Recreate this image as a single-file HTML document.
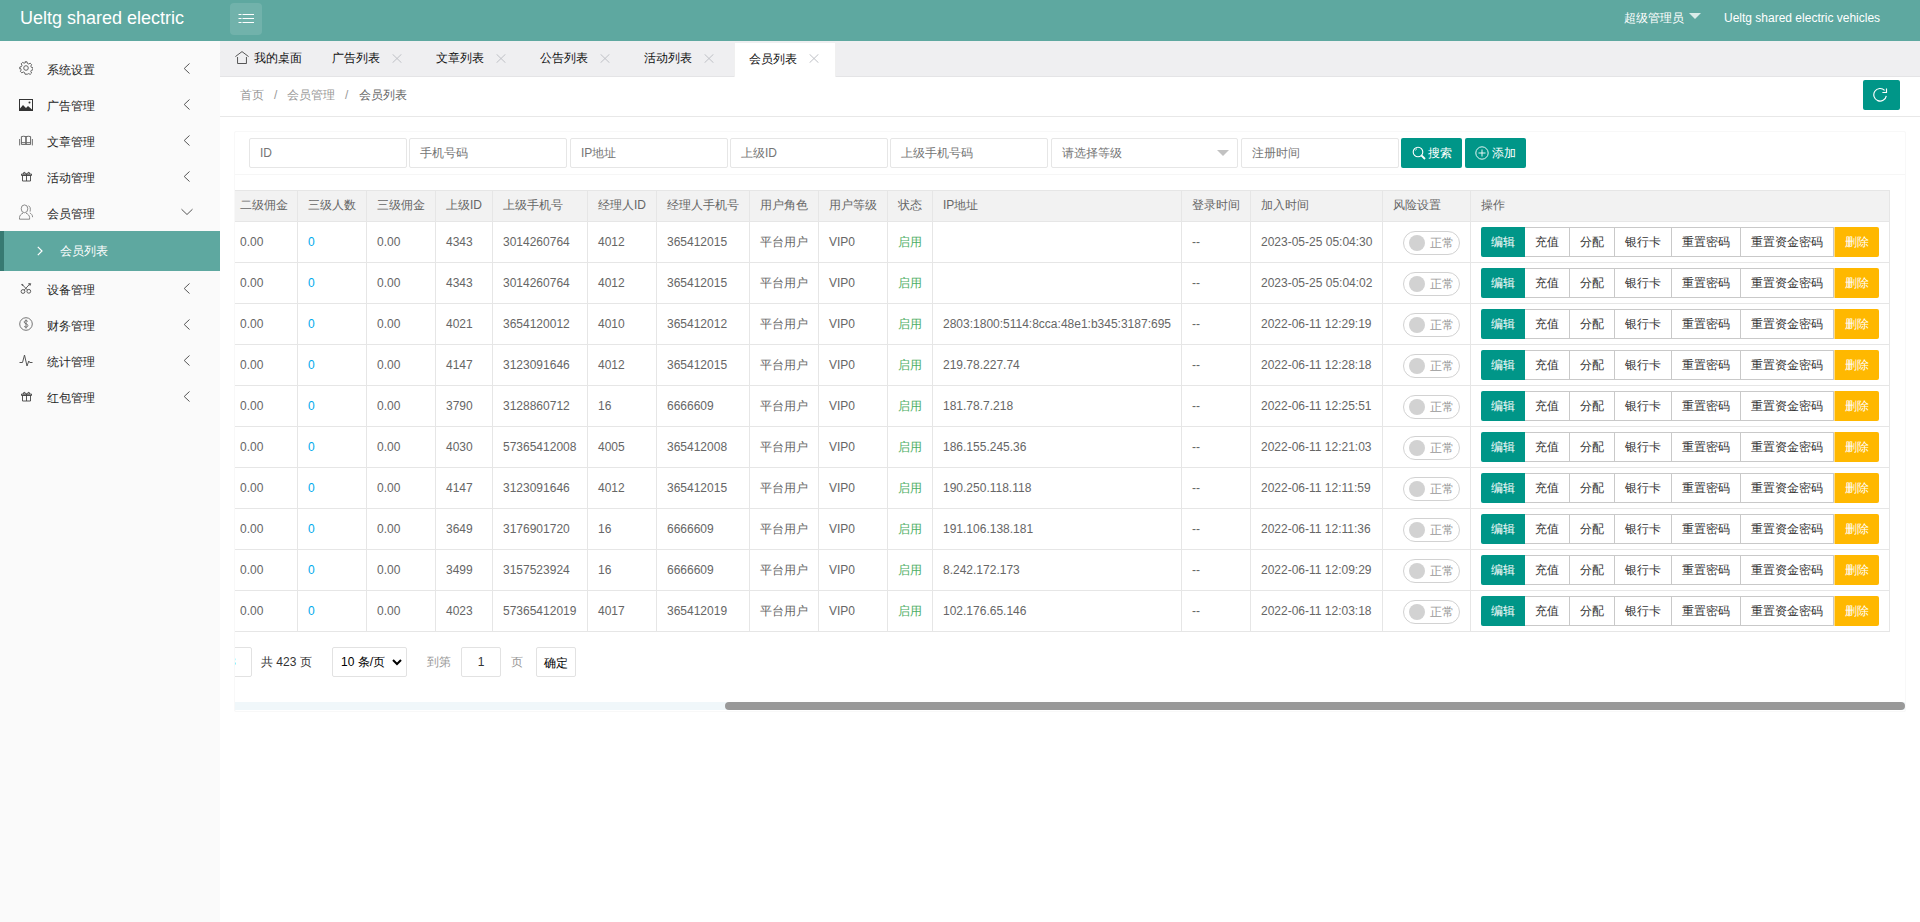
<!DOCTYPE html><html><head><meta charset="utf-8"><title>member</title><style>
*{margin:0;padding:0;box-sizing:border-box}
html,body{width:1920px;height:922px;overflow:hidden;background:#fff;font-family:"Liberation Sans",sans-serif;font-size:12px;color:#333}
.abs{position:absolute}
.header{position:absolute;left:0;top:0;width:1920px;height:41px;background:#5ea8a0}
.logo{position:absolute;left:20px;top:7px;font-size:18px;line-height:22px;color:#fff;white-space:nowrap}
.ham{position:absolute;left:230px;top:3px;width:32px;height:32px;border-radius:4px;background:rgba(255,255,255,.12)}
.hright{position:absolute;top:10px;font-size:12px;line-height:16px;color:#fff;white-space:nowrap}
.side{position:absolute;left:0;top:41px;width:220px;height:881px;background:#fafafa}
.mi{position:absolute;left:0;width:220px;height:36px}
.mi .t{position:absolute;left:47px;top:1px;line-height:36px;font-size:12px;color:#262626;white-space:nowrap}
.mi svg.ic{position:absolute;left:19px}
.mi svg.ar{position:absolute;left:183px}
.sub{position:absolute;left:0;top:190px;width:220px;height:40px;background:#5ea8a0;border-left:4px solid #377a72}
.sub .t{position:absolute;left:56px;top:0;line-height:40px;color:#fff;font-size:12px}
.tabs{position:absolute;left:220px;top:41px;width:1700px;height:36px;background:#efeff1;border-bottom:1px solid #e4e4e6}
.tab{position:absolute;top:0;height:36px;line-height:35px;font-size:12px;color:#111;white-space:nowrap}
.tab.on{background:#fff;top:2px;height:35px;line-height:33px;border-left:1px solid #f0f0f0;border-right:1px solid #f0f0f0}
.crumb{position:absolute;left:220px;top:77px;width:1700px;height:40px;border-bottom:1px solid #e8e8e8;background:#fff}
.crumb span{position:absolute;top:0;line-height:37px;color:#999;white-space:nowrap}
.refresh{position:absolute;left:1863px;top:80px;width:37px;height:30px;background:#009688;border-radius:2px}
.card{position:absolute;left:234px;top:131px;width:1672px;height:581px;border:1px solid #f8f8f8;border-radius:2px}
.cardline{position:absolute;left:235px;top:174px;width:1670px;height:1px;background:#f6f6f6}
.inp{position:absolute;top:138px;height:30px;border:1px solid #e6e6e6;border-radius:2px;background:#fff;line-height:28px;padding-left:10px;color:#757575;font-size:12px;white-space:nowrap}
.btn{position:absolute;top:138px;height:30px;width:61px;background:#009688;border-radius:2px;color:#fff;line-height:30px;font-size:12px;white-space:nowrap}
.tbl{position:absolute;left:0;top:0;width:1920px;height:922px;overflow:hidden;clip-path:inset(0 0 0 235px)}
.thbg{position:absolute;left:229px;width:1660px;background:#f2f2f2}
.th{position:absolute;line-height:31px;color:#666;font-size:12px;white-space:nowrap}
.td{position:absolute;line-height:41px;padding-top:1px;color:#666;font-size:12px;white-space:nowrap}
.hl{position:absolute;left:229px;width:1661px;height:1px;background:#e6e6e6}
.vl{position:absolute;width:1px;background:#e6e6e6}
.blue{color:#01aaed}
.green{color:#4cae64}
.sw{position:absolute;left:1403px;width:57px;height:24px;border:1px solid #d2d2d2;border-radius:20px;background:#fff}
.sw i{position:absolute;left:5px;top:3px;width:16px;height:16px;border-radius:50%;background:#d2d2d2}
.sw em{position:absolute;left:26px;top:0;line-height:22px;font-style:normal;color:#999;font-size:12px}
.bg{position:absolute;left:1481px;height:30px;display:flex;white-space:nowrap}
.bg span{display:block;height:30px;line-height:28px;text-align:center;font-size:12px}
.b1{width:44px;line-height:30px !important;background:#009688;color:#fff;border-radius:2px 0 0 2px}
.b2{line-height:29px !important;background:#fff;color:#333;border:1px solid #c9c9c9;border-left:none}
.b3{width:45px;line-height:30px !important;background:#ffb800;color:#fff;border-left:1px solid rgba(255,255,255,.5);border-radius:0 2px 2px 0}
.pg{position:absolute;top:647px;height:30px;line-height:28px;border:1px solid #e2e2e2;border-radius:2px;background:#fff;font-size:12px;white-space:nowrap}
.ptxt{position:absolute;top:647px;line-height:30px;font-size:12px;white-space:nowrap}
.track{position:absolute;left:235px;top:702px;width:1670px;height:8px;background:#f0f7fa}
.thumb{position:absolute;left:725px;top:702px;width:1180px;height:8px;border-radius:4px;background:#999}

</style></head><body>
<div class="header">
  <div class="logo">Ueltg shared electric</div>
  <div class="ham"><svg width="32" height="32" viewBox="0 0 32 32" style="position:absolute;left:0;top:0"><g stroke="#fff" stroke-width="1.1" fill="none"><path d="M8.5 11.5h3M12.5 11.5h11.5M8.5 15.5h3M12.5 15.5h11.5M8.5 19.5h3M12.5 19.5h11.5"/></g></svg></div>
  <div class="hright" style="left:1624px">超级管理员</div>
  <svg class="abs" style="left:1689px;top:13px" width="12" height="6" viewBox="0 0 12 6"><path d="M0 0h12L6 6z" fill="#d9ece9"/></svg>
  <div class="hright" style="left:1724px">Ueltg shared electric vehicles</div>
</div>
<div class="side">
  <!-- 系统设置 -->
  <div class="mi" style="top:10px">
    <svg class="ic" style="top:10px" width="14" height="14" viewBox="0 0 14 14"><g fill="none" stroke="#555" stroke-width="0.9"><circle cx="7" cy="7" r="2.3"/><path d="M6 0.8h2l0.4 1.6 1.3 0.6 1.5-0.8 1.4 1.4-0.8 1.5 0.6 1.3 1.6 0.4v2l-1.6 0.4-0.6 1.3 0.8 1.5-1.4 1.4-1.5-0.8-1.3 0.6L8 13.2H6l-0.4-1.6-1.3-0.6-1.5 0.8-1.4-1.4 0.8-1.5-0.6-1.3L0.8 8V6l1.6-0.4 0.6-1.3-0.8-1.5 1.4-1.4 1.5 0.8 1.3-0.6z"/></g></svg>
    <div class="t">系统设置</div>
    <svg class="ar" style="top:12px" width="8" height="11" viewBox="0 0 8 11"><path d="M6.5 0.5L1.2 5.5l5.3 5" fill="none" stroke="#555" stroke-width="1"/></svg>
  </div>
  <!-- 广告管理 -->
  <div class="mi" style="top:46px">
    <svg class="ic" style="top:12px" width="14" height="12" viewBox="0 0 14 12"><rect x="0.5" y="0.5" width="13" height="11" fill="none" stroke="#333" stroke-width="1"/><path d="M1 11V9.5L4 6l3 3 2-2 4 3.5V11z" fill="#333"/><circle cx="10.5" cy="3.5" r="1" fill="#333"/></svg>
    <div class="t">广告管理</div>
    <svg class="ar" style="top:12px" width="8" height="11" viewBox="0 0 8 11"><path d="M6.5 0.5L1.2 5.5l5.3 5" fill="none" stroke="#555" stroke-width="1"/></svg>
  </div>
  <!-- 文章管理 -->
  <div class="mi" style="top:82px">
    <svg class="ic" style="top:12px" width="14" height="12" viewBox="0 0 14 12"><g fill="none" stroke="#555" stroke-width="0.9"><path d="M2.4 1.6Q4.6 0.9 6.9 1.6V9.4H2.4zM7.1 1.6Q9.4 0.9 11.6 1.6V9.4H7.1z"/><path d="M0.6 4v6.4M13.4 4v6.4M2.4 7.6h4.5M7.1 7.6h4.5" stroke="#666"/></g></svg>
    <div class="t">文章管理</div>
    <svg class="ar" style="top:12px" width="8" height="11" viewBox="0 0 8 11"><path d="M6.5 0.5L1.2 5.5l5.3 5" fill="none" stroke="#555" stroke-width="1"/></svg>
  </div>
  <!-- 活动管理 -->
  <div class="mi" style="top:118px">
    <svg class="ic" style="top:12px;left:21px" width="11" height="11" viewBox="0 0 11 11"><g fill="none" stroke="#444" stroke-width="0.9"><path d="M1.5 4h8v6h-8zM0.5 3h10v1.5h-10zM5.5 3v7M2.5 3l0.5-2 2.5 2 2.5-2 0.5 2"/></g></svg>
    <div class="t">活动管理</div>
    <svg class="ar" style="top:12px" width="8" height="11" viewBox="0 0 8 11"><path d="M6.5 0.5L1.2 5.5l5.3 5" fill="none" stroke="#555" stroke-width="1"/></svg>
  </div>
  <!-- 会员管理 -->
  <div class="mi" style="top:154px">
    <svg class="ic" style="top:9px" width="15" height="16" viewBox="0 0 15 16"><g fill="none" stroke="#777" stroke-width="0.85"><ellipse cx="5.5" cy="4.8" rx="3.3" ry="3.9"/><path d="M0.5 15.2v-1.6C0.5 11.6 2.2 9.8 4 9.2M7 9.2C8.8 9.8 10.6 11.6 10.6 13.6v1.6H0.5"/><path d="M9.4 1.8c1.6 0.6 2.4 2.2 1.7 5.8M10.8 9c1.4 0.6 2.8 2 2.8 4.2"/></g></svg>
    <div class="t">会员管理</div>
    <svg class="ar" style="top:13px;left:181px" width="12" height="8" viewBox="0 0 12 8"><path d="M0.5 1.2L6 6.5l5.5-5.3" fill="none" stroke="#555" stroke-width="1"/></svg>
  </div>
  <div class="sub">
    <svg class="abs" style="left:33px;top:15px" width="6" height="10" viewBox="0 0 6 10"><path d="M0.8 0.8L5 5 0.8 9.2" fill="none" stroke="#fff" stroke-width="1.2"/></svg>
    <div class="t">会员列表</div>
  </div>
  <!-- 设备管理 -->
  <div class="mi" style="top:230px">
    <svg class="ic" style="top:10px;left:19px" width="14" height="14" viewBox="0 0 14 14"><g fill="none" stroke="#555" stroke-width="0.95"><circle cx="4" cy="10.5" r="1.9"/><circle cx="9.8" cy="10.3" r="1.9"/><path d="M5.2 9.1L10.6 3.2M8.6 9.1L3 3.4"/><path d="M2.6 3.2l1.6 1.4M9.4 2.6l2 0.4-0.6 1.6" stroke-width="1.3"/></g></svg>
    <div class="t">设备管理</div>
    <svg class="ar" style="top:12px" width="8" height="11" viewBox="0 0 8 11"><path d="M6.5 0.5L1.2 5.5l5.3 5" fill="none" stroke="#555" stroke-width="1"/></svg>
  </div>
  <!-- 财务管理 -->
  <div class="mi" style="top:266px">
    <svg class="ic" style="top:10px" width="14" height="14" viewBox="0 0 14 14"><g fill="none" stroke="#666" stroke-width="0.9"><circle cx="7" cy="7" r="6.3"/><path d="M8.8 4.5C8.3 3.8 7.6 3.6 7 3.6 5.9 3.6 5.2 4.3 5.2 5.1c0 1.9 3.7 1.3 3.7 3.5 0 0.9-0.8 1.6-1.9 1.6-0.8 0-1.5-0.3-1.9-1M7 2.5v9"/></g></svg>
    <div class="t">财务管理</div>
    <svg class="ar" style="top:12px" width="8" height="11" viewBox="0 0 8 11"><path d="M6.5 0.5L1.2 5.5l5.3 5" fill="none" stroke="#555" stroke-width="1"/></svg>
  </div>
  <!-- 统计管理 -->
  <div class="mi" style="top:302px">
    <svg class="ic" style="top:11px" width="14" height="13" viewBox="0 0 14 13"><path d="M0.5 8.5h3l2-7.5 2.5 11 1.8-5 0.9 1.5h2.8" fill="none" stroke="#555" stroke-width="1"/></svg>
    <div class="t">统计管理</div>
    <svg class="ar" style="top:12px" width="8" height="11" viewBox="0 0 8 11"><path d="M6.5 0.5L1.2 5.5l5.3 5" fill="none" stroke="#555" stroke-width="1"/></svg>
  </div>
  <!-- 红包管理 -->
  <div class="mi" style="top:338px">
    <svg class="ic" style="top:12px;left:21px" width="11" height="11" viewBox="0 0 11 11"><g fill="none" stroke="#444" stroke-width="0.9"><path d="M1.5 4h8v6h-8zM0.5 3h10v1.5h-10zM5.5 3v7M2.5 3l0.5-2 2.5 2 2.5-2 0.5 2"/></g></svg>
    <div class="t">红包管理</div>
    <svg class="ar" style="top:12px" width="8" height="11" viewBox="0 0 8 11"><path d="M6.5 0.5L1.2 5.5l5.3 5" fill="none" stroke="#555" stroke-width="1"/></svg>
  </div>
</div>
<div class="tabs">
  <div class="tab" style="left:15px"><svg class="abs" style="left:0;top:10px" width="15" height="14" viewBox="0 0 15 14"><g fill="none" stroke="#444" stroke-width="0.9"><path d="M0.4 5.6L7 0.6l6.6 5"/><path d="M2.55 6v6.5h8.9V6"/></g></svg><span style="margin-left:19px">我的桌面</span></div>
  <div class="tab" style="left:112px">广告列表<svg class="abs" style="left:60px;top:13px" width="10" height="9" viewBox="0 0 10 9"><path d="M0.5 0.2l9 8.6M9.5 0.2l-9 8.6" stroke="#bfc1c6" stroke-width="1"/></svg></div>
  <div class="tab" style="left:216px">文章列表<svg class="abs" style="left:60px;top:13px" width="10" height="9" viewBox="0 0 10 9"><path d="M0.5 0.2l9 8.6M9.5 0.2l-9 8.6" stroke="#bfc1c6" stroke-width="1"/></svg></div>
  <div class="tab" style="left:320px">公告列表<svg class="abs" style="left:60px;top:13px" width="10" height="9" viewBox="0 0 10 9"><path d="M0.5 0.2l9 8.6M9.5 0.2l-9 8.6" stroke="#bfc1c6" stroke-width="1"/></svg></div>
  <div class="tab" style="left:424px">活动列表<svg class="abs" style="left:60px;top:13px" width="10" height="9" viewBox="0 0 10 9"><path d="M0.5 0.2l9 8.6M9.5 0.2l-9 8.6" stroke="#bfc1c6" stroke-width="1"/></svg></div>
  <div class="tab on" style="left:514px;width:102px;padding-left:14px">会员列表<svg class="abs" style="left:74px;top:11px" width="10" height="9" viewBox="0 0 10 9"><path d="M0.5 0.2l9 8.6M9.5 0.2l-9 8.6" stroke="#bfc1c6" stroke-width="1"/></svg></div>
</div>
<div class="crumb">
  <span style="left:20px">首页</span><span style="left:54px">/</span><span style="left:67px">会员管理</span><span style="left:125px">/</span><span style="left:139px;color:#666">会员列表</span>
</div>
<div class="refresh"><svg class="abs" style="left:10px;top:7px" width="16" height="16" viewBox="0 0 16 16"><g fill="none" stroke="#fff" stroke-width="1.15"><path d="M13.3 8.9A6.3 6.3 0 1 1 11.6 3.4"/><path d="M9.4 5.5H13.5V1.4"/></g></svg></div>
<div class="card"></div>
<div class="cardline"></div>
<div class="inp" style="left:249px;width:158px">ID</div>
<div class="inp" style="left:409px;width:158px">手机号码</div>
<div class="inp" style="left:570px;width:158px">IP地址</div>
<div class="inp" style="left:730px;width:158px">上级ID</div>
<div class="inp" style="left:890px;width:158px">上级手机号码</div>
<div class="inp" style="left:1051px;width:187px">请选择等级<svg class="abs" style="left:165px;top:11px" width="12" height="6" viewBox="0 0 12 6"><path d="M0 0h12L6 6z" fill="#c2c2c2"/></svg></div>
<div class="inp" style="left:1241px;width:158px">注册时间</div>
<div class="btn" style="left:1401px"><svg class="abs" style="left:11px;top:8px" width="14" height="14" viewBox="0 0 14 14"><g fill="none" stroke="#fff" stroke-width="1.1"><circle cx="6" cy="6" r="4.8"/><path d="M9.5 9.5l3.5 3.5" stroke-width="1.8"/><path d="M3.5 4.5a3 3 0 0 1 1.5-2" stroke-width="0.8"/></g></svg><span class="abs" style="left:27px;top:0">搜索</span></div>
<div class="btn" style="left:1465px"><svg class="abs" style="left:10px;top:8px" width="14" height="14" viewBox="0 0 14 14"><g fill="none" stroke="#fff" stroke-width="0.9"><circle cx="7" cy="7" r="6.2"/><path d="M7 3.5v7M3.5 7h7"/></g></svg><span class="abs" style="left:27px;top:0">添加</span></div>

<div class="tbl">
<div class="thbg" style="top:190px;height:32px"></div>
<div class="th" style="left:240px;top:190px">二级佣金</div>
<div class="th" style="left:308px;top:190px">三级人数</div>
<div class="th" style="left:377px;top:190px">三级佣金</div>
<div class="th" style="left:446px;top:190px">上级ID</div>
<div class="th" style="left:503px;top:190px">上级手机号</div>
<div class="th" style="left:598px;top:190px">经理人ID</div>
<div class="th" style="left:667px;top:190px">经理人手机号</div>
<div class="th" style="left:760px;top:190px">用户角色</div>
<div class="th" style="left:829px;top:190px">用户等级</div>
<div class="th" style="left:898px;top:190px">状态</div>
<div class="th" style="left:943px;top:190px">IP地址</div>
<div class="th" style="left:1192px;top:190px">登录时间</div>
<div class="th" style="left:1261px;top:190px">加入时间</div>
<div class="th" style="left:1393px;top:190px">风险设置</div>
<div class="th" style="left:1481px;top:190px">操作</div>
<div class="hl" style="top:190px"></div>
<div class="hl" style="top:221px"></div>
<div class="hl" style="top:262px"></div>
<div class="hl" style="top:303px"></div>
<div class="hl" style="top:344px"></div>
<div class="hl" style="top:385px"></div>
<div class="hl" style="top:426px"></div>
<div class="hl" style="top:467px"></div>
<div class="hl" style="top:508px"></div>
<div class="hl" style="top:549px"></div>
<div class="hl" style="top:590px"></div>
<div class="hl" style="top:631px"></div>
<div class="vl" style="left:297px;top:190px;height:442px"></div>
<div class="vl" style="left:366px;top:190px;height:442px"></div>
<div class="vl" style="left:435px;top:190px;height:442px"></div>
<div class="vl" style="left:492px;top:190px;height:442px"></div>
<div class="vl" style="left:587px;top:190px;height:442px"></div>
<div class="vl" style="left:656px;top:190px;height:442px"></div>
<div class="vl" style="left:749px;top:190px;height:442px"></div>
<div class="vl" style="left:818px;top:190px;height:442px"></div>
<div class="vl" style="left:887px;top:190px;height:442px"></div>
<div class="vl" style="left:932px;top:190px;height:442px"></div>
<div class="vl" style="left:1181px;top:190px;height:442px"></div>
<div class="vl" style="left:1250px;top:190px;height:442px"></div>
<div class="vl" style="left:1382px;top:190px;height:442px"></div>
<div class="vl" style="left:1470px;top:190px;height:442px"></div>
<div class="vl" style="left:1889px;top:190px;height:442px"></div>
<div class="td" style="left:240px;top:221px">0.00</div>
<div class="td" style="left:308px;top:221px"><span class="blue">0</span></div>
<div class="td" style="left:377px;top:221px">0.00</div>
<div class="td" style="left:446px;top:221px">4343</div>
<div class="td" style="left:503px;top:221px">3014260764</div>
<div class="td" style="left:598px;top:221px">4012</div>
<div class="td" style="left:667px;top:221px">365412015</div>
<div class="td" style="left:760px;top:221px">平台用户</div>
<div class="td" style="left:829px;top:221px">VIP0</div>
<div class="td" style="left:898px;top:221px"><span class="green">启用</span></div>
<div class="td" style="left:943px;top:221px"></div>
<div class="td" style="left:1192px;top:221px">--</div>
<div class="td" style="left:1261px;top:221px">2023-05-25 05:04:30</div>
<div class="sw" style="top:231px"><i></i><em>正常</em></div>
<div class="bg" style="top:227px"><span class="b1">编辑</span><span class="b2" style="width:45px">充值</span><span class="b2" style="width:45px">分配</span><span class="b2" style="width:57px">银行卡</span><span class="b2" style="width:69px">重置密码</span><span class="b2" style="width:93px">重置资金密码</span><span class="b3">删除</span></div>
<div class="td" style="left:240px;top:262px">0.00</div>
<div class="td" style="left:308px;top:262px"><span class="blue">0</span></div>
<div class="td" style="left:377px;top:262px">0.00</div>
<div class="td" style="left:446px;top:262px">4343</div>
<div class="td" style="left:503px;top:262px">3014260764</div>
<div class="td" style="left:598px;top:262px">4012</div>
<div class="td" style="left:667px;top:262px">365412015</div>
<div class="td" style="left:760px;top:262px">平台用户</div>
<div class="td" style="left:829px;top:262px">VIP0</div>
<div class="td" style="left:898px;top:262px"><span class="green">启用</span></div>
<div class="td" style="left:943px;top:262px"></div>
<div class="td" style="left:1192px;top:262px">--</div>
<div class="td" style="left:1261px;top:262px">2023-05-25 05:04:02</div>
<div class="sw" style="top:272px"><i></i><em>正常</em></div>
<div class="bg" style="top:268px"><span class="b1">编辑</span><span class="b2" style="width:45px">充值</span><span class="b2" style="width:45px">分配</span><span class="b2" style="width:57px">银行卡</span><span class="b2" style="width:69px">重置密码</span><span class="b2" style="width:93px">重置资金密码</span><span class="b3">删除</span></div>
<div class="td" style="left:240px;top:303px">0.00</div>
<div class="td" style="left:308px;top:303px"><span class="blue">0</span></div>
<div class="td" style="left:377px;top:303px">0.00</div>
<div class="td" style="left:446px;top:303px">4021</div>
<div class="td" style="left:503px;top:303px">3654120012</div>
<div class="td" style="left:598px;top:303px">4010</div>
<div class="td" style="left:667px;top:303px">365412012</div>
<div class="td" style="left:760px;top:303px">平台用户</div>
<div class="td" style="left:829px;top:303px">VIP0</div>
<div class="td" style="left:898px;top:303px"><span class="green">启用</span></div>
<div class="td" style="left:943px;top:303px">2803:1800:5114:8cca:48e1:b345:3187:695</div>
<div class="td" style="left:1192px;top:303px">--</div>
<div class="td" style="left:1261px;top:303px">2022-06-11 12:29:19</div>
<div class="sw" style="top:313px"><i></i><em>正常</em></div>
<div class="bg" style="top:309px"><span class="b1">编辑</span><span class="b2" style="width:45px">充值</span><span class="b2" style="width:45px">分配</span><span class="b2" style="width:57px">银行卡</span><span class="b2" style="width:69px">重置密码</span><span class="b2" style="width:93px">重置资金密码</span><span class="b3">删除</span></div>
<div class="td" style="left:240px;top:344px">0.00</div>
<div class="td" style="left:308px;top:344px"><span class="blue">0</span></div>
<div class="td" style="left:377px;top:344px">0.00</div>
<div class="td" style="left:446px;top:344px">4147</div>
<div class="td" style="left:503px;top:344px">3123091646</div>
<div class="td" style="left:598px;top:344px">4012</div>
<div class="td" style="left:667px;top:344px">365412015</div>
<div class="td" style="left:760px;top:344px">平台用户</div>
<div class="td" style="left:829px;top:344px">VIP0</div>
<div class="td" style="left:898px;top:344px"><span class="green">启用</span></div>
<div class="td" style="left:943px;top:344px">219.78.227.74</div>
<div class="td" style="left:1192px;top:344px">--</div>
<div class="td" style="left:1261px;top:344px">2022-06-11 12:28:18</div>
<div class="sw" style="top:354px"><i></i><em>正常</em></div>
<div class="bg" style="top:350px"><span class="b1">编辑</span><span class="b2" style="width:45px">充值</span><span class="b2" style="width:45px">分配</span><span class="b2" style="width:57px">银行卡</span><span class="b2" style="width:69px">重置密码</span><span class="b2" style="width:93px">重置资金密码</span><span class="b3">删除</span></div>
<div class="td" style="left:240px;top:385px">0.00</div>
<div class="td" style="left:308px;top:385px"><span class="blue">0</span></div>
<div class="td" style="left:377px;top:385px">0.00</div>
<div class="td" style="left:446px;top:385px">3790</div>
<div class="td" style="left:503px;top:385px">3128860712</div>
<div class="td" style="left:598px;top:385px">16</div>
<div class="td" style="left:667px;top:385px">6666609</div>
<div class="td" style="left:760px;top:385px">平台用户</div>
<div class="td" style="left:829px;top:385px">VIP0</div>
<div class="td" style="left:898px;top:385px"><span class="green">启用</span></div>
<div class="td" style="left:943px;top:385px">181.78.7.218</div>
<div class="td" style="left:1192px;top:385px">--</div>
<div class="td" style="left:1261px;top:385px">2022-06-11 12:25:51</div>
<div class="sw" style="top:395px"><i></i><em>正常</em></div>
<div class="bg" style="top:391px"><span class="b1">编辑</span><span class="b2" style="width:45px">充值</span><span class="b2" style="width:45px">分配</span><span class="b2" style="width:57px">银行卡</span><span class="b2" style="width:69px">重置密码</span><span class="b2" style="width:93px">重置资金密码</span><span class="b3">删除</span></div>
<div class="td" style="left:240px;top:426px">0.00</div>
<div class="td" style="left:308px;top:426px"><span class="blue">0</span></div>
<div class="td" style="left:377px;top:426px">0.00</div>
<div class="td" style="left:446px;top:426px">4030</div>
<div class="td" style="left:503px;top:426px">57365412008</div>
<div class="td" style="left:598px;top:426px">4005</div>
<div class="td" style="left:667px;top:426px">365412008</div>
<div class="td" style="left:760px;top:426px">平台用户</div>
<div class="td" style="left:829px;top:426px">VIP0</div>
<div class="td" style="left:898px;top:426px"><span class="green">启用</span></div>
<div class="td" style="left:943px;top:426px">186.155.245.36</div>
<div class="td" style="left:1192px;top:426px">--</div>
<div class="td" style="left:1261px;top:426px">2022-06-11 12:21:03</div>
<div class="sw" style="top:436px"><i></i><em>正常</em></div>
<div class="bg" style="top:432px"><span class="b1">编辑</span><span class="b2" style="width:45px">充值</span><span class="b2" style="width:45px">分配</span><span class="b2" style="width:57px">银行卡</span><span class="b2" style="width:69px">重置密码</span><span class="b2" style="width:93px">重置资金密码</span><span class="b3">删除</span></div>
<div class="td" style="left:240px;top:467px">0.00</div>
<div class="td" style="left:308px;top:467px"><span class="blue">0</span></div>
<div class="td" style="left:377px;top:467px">0.00</div>
<div class="td" style="left:446px;top:467px">4147</div>
<div class="td" style="left:503px;top:467px">3123091646</div>
<div class="td" style="left:598px;top:467px">4012</div>
<div class="td" style="left:667px;top:467px">365412015</div>
<div class="td" style="left:760px;top:467px">平台用户</div>
<div class="td" style="left:829px;top:467px">VIP0</div>
<div class="td" style="left:898px;top:467px"><span class="green">启用</span></div>
<div class="td" style="left:943px;top:467px">190.250.118.118</div>
<div class="td" style="left:1192px;top:467px">--</div>
<div class="td" style="left:1261px;top:467px">2022-06-11 12:11:59</div>
<div class="sw" style="top:477px"><i></i><em>正常</em></div>
<div class="bg" style="top:473px"><span class="b1">编辑</span><span class="b2" style="width:45px">充值</span><span class="b2" style="width:45px">分配</span><span class="b2" style="width:57px">银行卡</span><span class="b2" style="width:69px">重置密码</span><span class="b2" style="width:93px">重置资金密码</span><span class="b3">删除</span></div>
<div class="td" style="left:240px;top:508px">0.00</div>
<div class="td" style="left:308px;top:508px"><span class="blue">0</span></div>
<div class="td" style="left:377px;top:508px">0.00</div>
<div class="td" style="left:446px;top:508px">3649</div>
<div class="td" style="left:503px;top:508px">3176901720</div>
<div class="td" style="left:598px;top:508px">16</div>
<div class="td" style="left:667px;top:508px">6666609</div>
<div class="td" style="left:760px;top:508px">平台用户</div>
<div class="td" style="left:829px;top:508px">VIP0</div>
<div class="td" style="left:898px;top:508px"><span class="green">启用</span></div>
<div class="td" style="left:943px;top:508px">191.106.138.181</div>
<div class="td" style="left:1192px;top:508px">--</div>
<div class="td" style="left:1261px;top:508px">2022-06-11 12:11:36</div>
<div class="sw" style="top:518px"><i></i><em>正常</em></div>
<div class="bg" style="top:514px"><span class="b1">编辑</span><span class="b2" style="width:45px">充值</span><span class="b2" style="width:45px">分配</span><span class="b2" style="width:57px">银行卡</span><span class="b2" style="width:69px">重置密码</span><span class="b2" style="width:93px">重置资金密码</span><span class="b3">删除</span></div>
<div class="td" style="left:240px;top:549px">0.00</div>
<div class="td" style="left:308px;top:549px"><span class="blue">0</span></div>
<div class="td" style="left:377px;top:549px">0.00</div>
<div class="td" style="left:446px;top:549px">3499</div>
<div class="td" style="left:503px;top:549px">3157523924</div>
<div class="td" style="left:598px;top:549px">16</div>
<div class="td" style="left:667px;top:549px">6666609</div>
<div class="td" style="left:760px;top:549px">平台用户</div>
<div class="td" style="left:829px;top:549px">VIP0</div>
<div class="td" style="left:898px;top:549px"><span class="green">启用</span></div>
<div class="td" style="left:943px;top:549px">8.242.172.173</div>
<div class="td" style="left:1192px;top:549px">--</div>
<div class="td" style="left:1261px;top:549px">2022-06-11 12:09:29</div>
<div class="sw" style="top:559px"><i></i><em>正常</em></div>
<div class="bg" style="top:555px"><span class="b1">编辑</span><span class="b2" style="width:45px">充值</span><span class="b2" style="width:45px">分配</span><span class="b2" style="width:57px">银行卡</span><span class="b2" style="width:69px">重置密码</span><span class="b2" style="width:93px">重置资金密码</span><span class="b3">删除</span></div>
<div class="td" style="left:240px;top:590px">0.00</div>
<div class="td" style="left:308px;top:590px"><span class="blue">0</span></div>
<div class="td" style="left:377px;top:590px">0.00</div>
<div class="td" style="left:446px;top:590px">4023</div>
<div class="td" style="left:503px;top:590px">57365412019</div>
<div class="td" style="left:598px;top:590px">4017</div>
<div class="td" style="left:667px;top:590px">365412019</div>
<div class="td" style="left:760px;top:590px">平台用户</div>
<div class="td" style="left:829px;top:590px">VIP0</div>
<div class="td" style="left:898px;top:590px"><span class="green">启用</span></div>
<div class="td" style="left:943px;top:590px">102.176.65.146</div>
<div class="td" style="left:1192px;top:590px">--</div>
<div class="td" style="left:1261px;top:590px">2022-06-11 12:03:18</div>
<div class="sw" style="top:600px"><i></i><em>正常</em></div>
<div class="bg" style="top:596px"><span class="b1">编辑</span><span class="b2" style="width:45px">充值</span><span class="b2" style="width:45px">分配</span><span class="b2" style="width:57px">银行卡</span><span class="b2" style="width:69px">重置密码</span><span class="b2" style="width:93px">重置资金密码</span><span class="b3">删除</span></div>
</div>
<div class="pg" style="left:200px;width:52px;clip-path:inset(0 0 0 35px)"><span class="abs blue" style="left:28px;top:0">3</span></div>
<div class="tblclip" style="position:absolute;left:0;top:0;width:234px;height:922px"></div>
<div class="ptxt" style="left:261px;color:#333">共 423 页</div>
<div class="pg" style="left:332px;width:75px;padding-left:8px;color:#000">10 条/页<svg class="abs" style="left:59px;top:11px" width="10" height="7" viewBox="0 0 10 7"><path d="M1 1l4 4 4-4" fill="none" stroke="#000" stroke-width="2"/></svg></div>
<div class="ptxt" style="left:427px;color:#999">到第</div>
<div class="pg" style="left:461px;width:40px;text-align:center;color:#333">1</div>
<div class="ptxt" style="left:511px;color:#999">页</div>
<div class="pg" style="left:536px;width:40px;text-align:center;color:#000;line-height:31px">确定</div>
<div class="track"></div>
<div class="thumb"></div>

</body></html>
